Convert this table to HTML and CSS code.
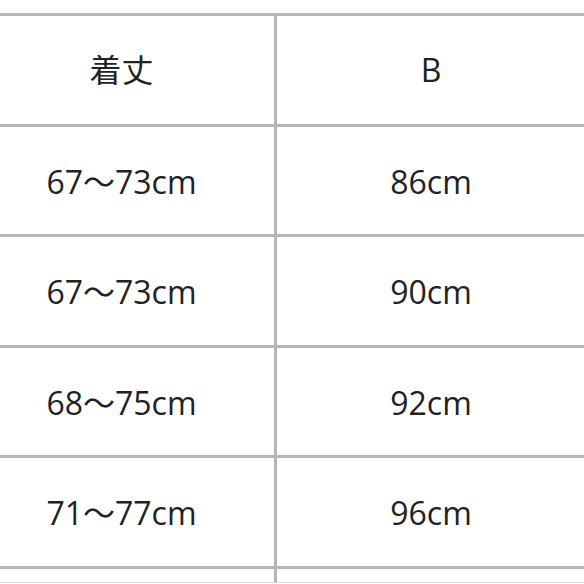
FILE: index.html
```html
<!DOCTYPE html>
<html lang="ja">
<head>
<meta charset="utf-8">
<link rel="stylesheet" href="styles.css">
</head>
<body>
<div class="sheet">
  <div class="size-table">
    <div class="cell head">着丈</div>
    <div class="cell head">B</div>
    <div class="cell">67～73cm</div>
    <div class="cell">86cm</div>
    <div class="cell">67～73cm</div>
    <div class="cell">90cm</div>
    <div class="cell">68～75cm</div>
    <div class="cell">92cm</div>
    <div class="cell">71～77cm</div>
    <div class="cell">96cm</div>
    <div class="cell tail"></div>
    <div class="cell tail"></div>
  </div>
</div>
</body>
</html>
```
FILE: styles.css
```css
html, body {
  margin: 0;
  padding: 0;
  background: #ffffff;
  overflow: hidden;
}
.sheet {
  width: 584px;
  height: 584px;
  overflow: hidden;
  padding-top: 13px;
  box-sizing: border-box;
}
.size-table {
  margin-left: -31px;
  display: grid;
  grid-template-columns: 308px 308px;
  border-top: 3px solid #b6b6b6;
  width: 616px;
}
.cell {
  height: 104.5px;
  padding-top: 3px;
  border-bottom: 3px solid #b6b6b6;
  display: flex;
  align-items: center;
  justify-content: center;
  font-family: "Open Sans", "Noto Sans CJK JP", sans-serif;
  font-size: 32px;
  color: #222222;
  line-height: 1;
}
.cell.head {
  height: 107.5px;
  padding-top: 0;
}
.cell:nth-child(odd) {
  border-right: 3px solid #b6b6b6;
  width: 305px;
}
.cell.tail {
  height: 13px;
  padding-top: 0;
  border-bottom: 1px solid #dedede;
}
```
